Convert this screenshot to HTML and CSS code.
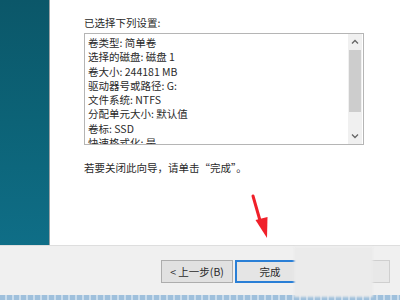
FILE: index.html
```html
<!DOCTYPE html>
<html>
<head>
<meta charset="utf-8">
<link rel="stylesheet" href="styles.css">
</head>
<body>
<div class="window">
  <div class="top">
    <div class="side"></div>
    <div class="main">
      <div class="label">已选择下列设置:</div>
      <div class="listbox">
        <div class="items">
          <div>卷类型: 简单卷</div>
          <div>选择的磁盘: 磁盘 1</div>
          <div>卷大小: 244181 MB</div>
          <div>驱动器号或路径: G:</div>
          <div>文件系统: NTFS</div>
          <div>分配单元大小: 默认值</div>
          <div>卷标: SSD</div>
          <div>快速格式化: 是</div>
        </div>
        <div class="scroll">
          <svg class="arr" width="8" height="6" viewBox="0 0 8 6"><path d="M1 4.5 L4 1.5 L7 4.5" fill="none" stroke="#666" stroke-width="1.3"/></svg>
          <div class="track"><div class="thumb"></div></div>
          <svg class="arr" width="8" height="6" viewBox="0 0 8 6"><path d="M1 1.5 L4 4.5 L7 1.5" fill="none" stroke="#666" stroke-width="1.3"/></svg>
        </div>
      </div>
      <div class="note">若要关闭此向导，请单击“完成”。</div>
    </div>
  </div>
  <div class="bottom">
    <div class="btn prev">&lt; 上一步(B)</div>
    <div class="btn finish">完成</div>
    <div class="btn cancel">取消</div>
  </div>
  <div class="strip"></div>
  <div class="blur"></div>
  <svg class="pointer" width="30" height="50" viewBox="0 0 30 50">
    <path d="M10 4 L18 32" stroke="#f0202a" stroke-width="3" stroke-linecap="round"/>
    <path d="M12.5 28 L24 46 L24.5 25 Z" fill="#f0202a"/>
  </svg>
</div>
</body>
</html>
```
FILE: styles.css
```css
html, body {
  margin: 0;
  padding: 0;
}
body {
  width: 400px;
  height: 300px;
  overflow: hidden;
  font-family: "Noto Sans CJK SC", "Noto Sans", sans-serif;
  font-size: 10.5px;
  color: #2a2a2a;
}
.window {
  position: relative;
  width: 400px;
  height: 300px;
  display: flex;
  flex-direction: column;
}
.top {
  height: 245px;
  display: flex;
  background: #fff;
}
.side {
  width: 49px;
  background: linear-gradient(180deg, #0b5769 0%, #0c6377 50%, #0f6e87 100%);
  border-right: 1px solid #9aa3a6;
}
.main {
  flex: 1;
  padding: 15px 0 0 34px;
}
.label {
  line-height: 15px;
  height: 18px;
}
.listbox {
  width: 280px;
  height: 112px;
  border: 1px solid #b5b5b5;
  display: flex;
  box-sizing: border-box;
  overflow: hidden;
}
.items {
  flex: 1;
  padding: 2px 0 0 3px;
  line-height: 14.3px;
}
.scroll {
  width: 14px;
  margin-right: 1px;
  background: #f0f0f0;
  display: flex;
  flex-direction: column;
  align-items: center;
}
.arr {
  margin: 5px 0;
}
.track {
  flex: 1;
  width: 100%;
}
.thumb {
  height: 62px;
  background: #cdcdcd;
  margin: 0 1px;
}
.note {
  margin-top: 16px;
  line-height: 14px;
}
.bottom {
  height: 50px;
  background: #f0f0f0;
  border-top: 1px solid #dedede;
  display: flex;
  align-items: center;
  padding-left: 161px;
  gap: 2px;
  box-sizing: border-box;
}
.btn {
  height: 23px;
  box-sizing: border-box;
  border: 1px solid #adadad;
  background: #e1e1e1;
  display: flex;
  align-items: center;
  justify-content: center;
  font-size: 10.5px;
  margin-top: 2px;
}
.prev {
  width: 72px;
}
.finish {
  width: 70px;
  border: 2px solid #2a7fd6;
  background: #e5e5e5;
}
.cancel {
  width: 78px;
  margin-left: 5px;
  color: #aaa;
  background: #e8e8e8;
  border-color: #cfcfcf;
}
.strip {
  height: 5px;
  background: repeating-linear-gradient(90deg, #9fc0dc 0 5px, #c9dcec 5px 7px);
}
.blur {
  position: absolute;
  left: 294px;
  top: 247px;
  width: 79px;
  height: 50px;
  background: #ebebeb;
  filter: blur(1px);
}
.pointer {
  position: absolute;
  left: 243px;
  top: 192px;
}
```
